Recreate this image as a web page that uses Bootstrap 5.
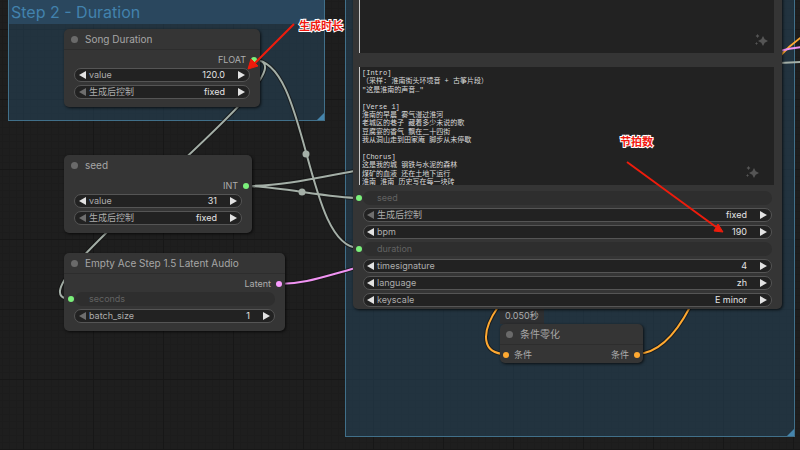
<!DOCTYPE html>
<html lang="zh-CN">
<head>
<meta charset="utf-8">
<meta name="viewport" content="width=device-width, initial-scale=1">
<title>Node editor</title>
<link href="https://cdn.jsdelivr.net/npm/bootstrap@5.3.0/dist/css/bootstrap.min.css" rel="stylesheet">
<style>
  body { background: #1d1d1d; font-family: Inter, "Noto Sans CJK SC", sans-serif; font-size: 9px; line-height: 12px; color: #adadad; }
  .board {
    background-color: #1e1e1e;
    background-image:
      linear-gradient(90deg, #171717 1px, transparent 1px),
      linear-gradient(#171717 1px, transparent 1px),
      linear-gradient(90deg, #1c1c1c 1px, transparent 1px),
      linear-gradient(#1c1c1c 1px, transparent 1px);
    background-size: 70px 70px, 70px 70px, 7px 7px, 7px 7px;
    background-position: 23px 29px, 23px 29px, 2px 1px, 2px 1px;
  }
  .zone { background: rgba(36, 62, 80, .66); border: 1px solid #41708a; }
  .zone-title { background: #2a475e; color: #4282ad; font-size: 16px; line-height: 24px; padding-left: 2px; }
  .zone-grip { right: 0; bottom: 0; width: 7px; height: 7px; background: #4585ad; clip-path: polygon(100% 0, 100% 100%, 0 100%); }
  .zone-duration { left: 8px; top: -1px; width: 317px; height: 122px; }
  .zone-prompt { left: 345px; top: -2px; width: 450px; height: 439px; }
  .unit { background: #353535; border-radius: 5px; box-shadow: 1px 1px 3px rgba(0, 0, 0, .7); }
  .unit-title { height: 21px; padding-left: 7px; gap: 7px; font-size: 10px; color: #a6a6a6; border-bottom: 1px solid #2d2d2d; }
  .unit-title.no-line { border-color: transparent; }
  .unit-title::before { content: ""; width: 7px; height: 7px; border-radius: 50%; background: #6a6a6a; }
  .unit-body { padding: 4px 0 8px; }
  .slot { height: 12px; padding: 0 3px; gap: 5px; margin-bottom: 2px; }
  .pin { width: 6px; height: 6px; border-radius: 50%; flex: none; background: #7bf07b; }
  .pin-pink { background: #fa9cff; }
  .pin-orange { background: #ffa931; }
  .stack { gap: 3px; }
  .widget { height: 14px; margin: 0 10px; padding: 0 4px; border: 1px solid #555; border-radius: 7px; background: #222; }
  .widget label { padding-left: 3px; white-space: nowrap; }
  .widget input { flex: 1 1 0; min-width: 0; height: 12px; padding: 0 13px 0 0; border: 0; background: none; color: #e4e4e4; text-align: right; outline: 0; }
  .step { display: flex; padding: 0; border: 0; background: none; color: #e2e2e2; }
  .step:disabled { color: #6e6e6e; }
  .step svg { width: 7px; height: 8px; fill: currentColor; }
  .linked { height: 14px; padding: 0 10px 0 4px; gap: 1px; }
  .linked span { flex: 1; height: 14px; line-height: 14px; padding-left: 14px; border-radius: 7px; background: #2e2e2e; color: #626262; }
  .unit-song { left: 64px; top: 29px; width: 196px; }
  .unit-seed { left: 64px; top: 155px; width: 188px; }
  .unit-latent { left: 64px; top: 253px; width: 221px; }
  .unit-zero { left: 500px; top: 324px; width: 143px; }
  .unit-zero .unit-title { padding-left: 6px; }
  .unit-zero .unit-body { padding-bottom: 0; }
  .timing { left: 500px; top: 307px; height: 17px; padding: 3px 5px 2px; background: #2e2f31; white-space: nowrap; }
  .unit-encode { left: 353px; top: -90px; width: 429px; padding-bottom: 2px; }
  .unit-encode .linked { padding-left: 3px; }
  .unit-encode .widget { padding-left: 3px; }
  .prompt-wrap { margin: 0 8px 14px 6px; }
  .prompt-text { display: block; width: 100%; height: 143px; padding: 2px; border: 0; border-left: 1px solid #c8c8c8; background: #222; color: #dcdcdc; resize: none; overflow: hidden; outline: 0; font: 7px/1.2 "Liberation Mono", "Noto Sans CJK SC", monospace; }
  .prompt-lyrics { height: 118px; }
  .lyrics-wrap { margin-bottom: 6px; }
  .sparkle { right: 6px; bottom: 6px; width: 13px; height: 13px; fill: #555; }
  .lyrics-wrap .sparkle { right: 15px; }
  .note-text { font-size: 11px; line-height: 14px; font-weight: 700; color: #f01810; -webkit-text-stroke: 2px #fff; paint-order: stroke fill; font-family: "Noto Sans CJK SC", sans-serif; white-space: nowrap; }
  .note-length { left: 299px; top: 18px; }
  .note-beat { left: 620px; top: 134px; }
</style>
<script src="https://cdn.jsdelivr.net/npm/bootstrap@5.3.0/dist/js/bootstrap.bundle.min.js"></script>
</head>
<body>
<svg class="d-none">
  <symbol id="left" viewBox="0 0 7 8"><path d="M7 0v8L0 4z"/></symbol>
  <symbol id="right" viewBox="0 0 7 8"><path d="M0 0v8l7-4z"/></symbol>
  <symbol id="spark" viewBox="0 0 13 13"><path d="M8 2l1.700 3.300L13 7 9.700 8.700 8 12 6.300 8.700 3 7l3.300-1.700zM2.500 0l.8 1.200 1.200.8-1.200.8-.8 1.200-.8-1.200L.5 2l1.200-.8zM1.500 8l.6.900.9.600-.9.600-.6.900-.6-.9-.9-.6.9-.6z"/></symbol>
</svg>
<main class="board position-relative overflow-hidden vw-100 vh-100">
  <section class="zone zone-duration position-absolute"><div class="zone-title">Step 2 - Duration</div><i class="zone-grip position-absolute"></i></section>
  <section class="zone zone-prompt position-absolute"><i class="zone-grip position-absolute"></i></section>

  <svg class="position-absolute top-0 start-0 w-100 h-100" fill="none">
    <g stroke="#151515" stroke-width="4" stroke-opacity=".7">
      <path d="M254 60C308 60 305 248 359 248M254 60C329 60-4 299 71 299M246 186C275 186 330 198 359 198M246 186C285 186 325 176 360 170M279 284C305 284 325 276 356 268M506 354C482 354 480 333 498 307M636 354C660 354 678 330 690 307"/>
    </g>
    <g stroke="#a4afa7" stroke-width="2">
      <path d="M254 60C308 60 305 248 359 248M254 60C329 60-4 299 71 299M246 186C275 186 330 198 359 198M246 186C285 186 325 176 360 170M780 63L820 61"/>
    </g>
    <g stroke="#ffa931" stroke-width="2"><path d="M506 354C482 354 480 333 498 307M636 354C660 354 678 330 690 307M780 56Q790 45 803 36"/></g>
    <g stroke="#f093f2" stroke-width="2"><path d="M279 284C305 284 325 276 356 268M780 51Q790 48 803 47"/></g>
    <g fill="#a4afa7"><circle cx="306" cy="154" r="3.500"/><circle cx="302" cy="192" r="3.500"/></g>
  </svg>

  <section class="unit unit-song position-absolute">
    <header class="unit-title d-flex align-items-center">Song Duration</header>
    <div class="unit-body">
      <div class="slot d-flex align-items-center justify-content-end">FLOAT<i class="pin"></i></div>
      <div class="stack d-flex flex-column">
        <div class="widget d-flex align-items-center"><button class="step" aria-label="减少"><svg><use href="#left"/></svg></button><label for="song-value">value</label><input id="song-value" value="120.0"><button class="step" aria-label="增加"><svg><use href="#right"/></svg></button></div>
        <div class="widget d-flex align-items-center"><button class="step" disabled aria-label="上一项"><svg><use href="#left"/></svg></button><label for="song-after">生成后控制</label><input id="song-after" value="fixed"><button class="step" aria-label="下一项"><svg><use href="#right"/></svg></button></div>
      </div>
    </div>
  </section>

  <section class="unit unit-seed position-absolute">
    <header class="unit-title no-line d-flex align-items-center">seed</header>
    <div class="unit-body">
      <div class="slot d-flex align-items-center justify-content-end">INT<i class="pin"></i></div>
      <div class="stack d-flex flex-column">
        <div class="widget d-flex align-items-center"><button class="step" aria-label="减少"><svg><use href="#left"/></svg></button><label for="seed-value">value</label><input id="seed-value" value="31"><button class="step" aria-label="增加"><svg><use href="#right"/></svg></button></div>
        <div class="widget d-flex align-items-center"><button class="step" disabled aria-label="上一项"><svg><use href="#left"/></svg></button><label for="seed-after">生成后控制</label><input id="seed-after" value="fixed"><button class="step" aria-label="下一项"><svg><use href="#right"/></svg></button></div>
      </div>
    </div>
  </section>

  <section class="unit unit-latent position-absolute">
    <header class="unit-title d-flex align-items-center">Empty Ace Step 1.5 Latent Audio</header>
    <div class="unit-body">
      <div class="slot d-flex align-items-center justify-content-end">Latent<i class="pin pin-pink"></i></div>
      <div class="stack d-flex flex-column">
        <div class="linked d-flex align-items-center"><i class="pin"></i><span>seconds</span></div>
        <div class="widget d-flex align-items-center"><button class="step" disabled aria-label="减少"><svg><use href="#left"/></svg></button><label for="batch">batch_size</label><input id="batch" value="1"><button class="step" aria-label="增加"><svg><use href="#right"/></svg></button></div>
      </div>
    </div>
  </section>

  <div class="timing position-absolute">0.050秒</div>
  <section class="unit unit-zero position-absolute">
    <header class="unit-title d-flex align-items-center">条件零化</header>
    <div class="unit-body">
      <div class="slot d-flex align-items-center"><i class="pin pin-orange"></i>条件<span class="ms-auto">条件</span><i class="pin pin-orange"></i></div>
    </div>
  </section>

  <section class="unit unit-encode position-absolute">
    <div class="prompt-wrap position-relative"><textarea class="prompt-text" aria-label="风格"></textarea><svg class="sparkle position-absolute"><use href="#spark"/></svg></div>
    <div class="prompt-wrap lyrics-wrap position-relative"><textarea class="prompt-text prompt-lyrics" aria-label="歌词">[Intro]
（采样: 淮南街头环境音 + 古筝片段）
"这是淮南的声音…"

[Verse 1]
淮南的早晨 雾气漫过淮河
老城区的巷子 藏着多少未说的歌
豆腐宴的香气 飘在二十四街
我从洞山走到田家庵 脚步从未停歇

[Chorus]
这是我的城 钢铁与水泥的森林
煤矿的血液 还在土地下运行
淮南 淮南 历史写在每一块砖</textarea><svg class="sparkle position-absolute"><use href="#spark"/></svg></div>
    <div class="stack d-flex flex-column">
      <div class="linked d-flex align-items-center"><i class="pin"></i><span>seed</span></div>
      <div class="widget d-flex align-items-center"><button class="step" disabled aria-label="上一项"><svg><use href="#left"/></svg></button><label for="after">生成后控制</label><input id="after" value="fixed"><button class="step" aria-label="下一项"><svg><use href="#right"/></svg></button></div>
      <div class="widget d-flex align-items-center"><button class="step" aria-label="减少"><svg><use href="#left"/></svg></button><label for="bpm">bpm</label><input id="bpm" value="190"><button class="step" aria-label="增加"><svg><use href="#right"/></svg></button></div>
      <div class="linked d-flex align-items-center"><i class="pin"></i><span>duration</span></div>
      <div class="widget d-flex align-items-center"><button class="step" aria-label="上一项"><svg><use href="#left"/></svg></button><label for="timesig">timesignature</label><input id="timesig" value="4"><button class="step" aria-label="下一项"><svg><use href="#right"/></svg></button></div>
      <div class="widget d-flex align-items-center"><button class="step" aria-label="上一项"><svg><use href="#left"/></svg></button><label for="language">language</label><input id="language" value="zh"><button class="step" aria-label="下一项"><svg><use href="#right"/></svg></button></div>
      <div class="widget d-flex align-items-center"><button class="step" aria-label="上一项"><svg><use href="#left"/></svg></button><label for="keyscale">keyscale</label><input id="keyscale" value="E minor"><button class="step" aria-label="下一项"><svg><use href="#right"/></svg></button></div>
    </div>
  </section>

  <svg class="position-absolute top-0 start-0 w-100 h-100 pe-none" fill="#ee1c0c" stroke="#ee1c0c">
    <path d="M294 24L254 64M627 162L716 227" stroke-width="2"/>
    <path d="M248 69l3-10 7 7zM723 232l-5-8-4 7z" stroke-width="1"/>
  </svg>
  <div class="note-text note-length position-absolute">生成时长</div>
  <div class="note-text note-beat position-absolute">节拍数</div>
</main>
</body>
</html>
